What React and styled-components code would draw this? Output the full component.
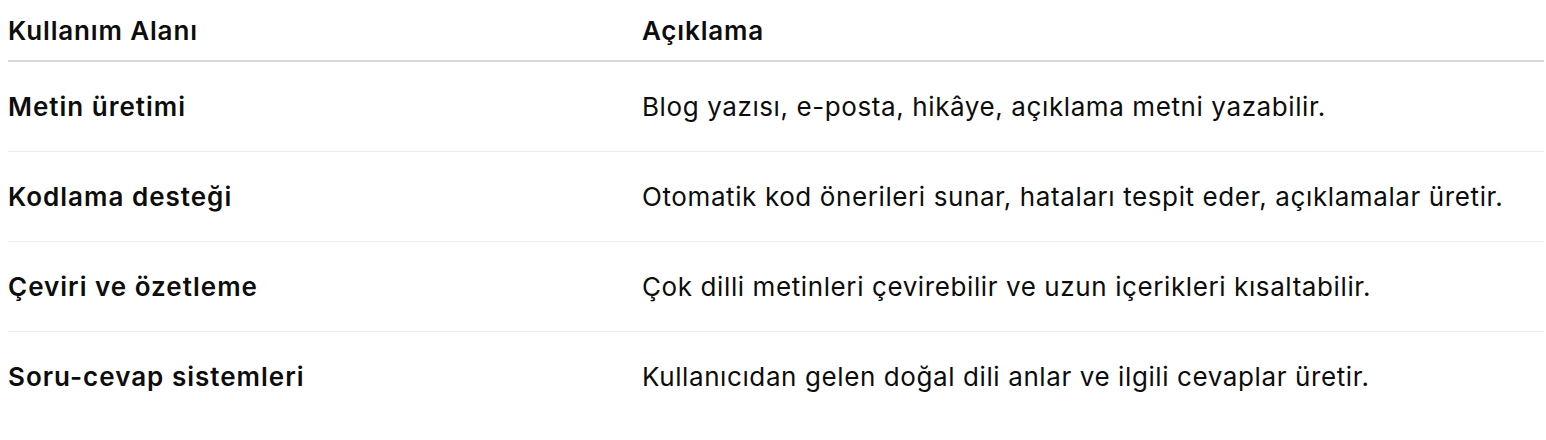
import React from 'react';
import styled, { createGlobalStyle } from 'styled-components';

const GlobalStyle = createGlobalStyle`
    body {
        margin: 0;
        background: #ffffff;
        font-family: Inter, "Noto Sans", sans-serif;
        color: #0d0d0d;
    }
`;

const Table = styled.div`
    margin: 0 2px 0 8px;
    display: grid;
    grid-template-columns: 634px 1fr;
    font-size: 26px;
    letter-spacing: 0.6px;
`;

const HeadCell = styled.div`
    height: 60px;
    display: flex;
    align-items: center;
    font-weight: 600;
    letter-spacing: 0.85px;
    border-bottom: 2px solid #d9d9d9;
`;

const Cell = styled.div`
    height: 89px;
    display: flex;
    align-items: center;
    font-weight: ${(p) => (p.$strong ? 600 : 400)};
    letter-spacing: ${(p) => (p.$strong ? '1px' : '0.6px')};
    border-bottom: ${(p) => (p.$last ? 'none' : '1px solid #ececec')};
`;

const rows = [
    ['Metin üretimi', 'Blog yazısı, e-posta, hikâye, açıklama metni yazabilir.'],
    ['Kodlama desteği', 'Otomatik kod önerileri sunar, hataları tespit eder, açıklamalar üretir.'],
    ['Çeviri ve özetleme', 'Çok dilli metinleri çevirebilir ve uzun içerikleri kısaltabilir.'],
    ['Soru-cevap sistemleri', 'Kullanıcıdan gelen doğal dili anlar ve ilgili cevaplar üretir.'],
];

const App = () => {
    return (
        <>
            <GlobalStyle />
            <Table>
                <HeadCell>Kullanım Alanı</HeadCell>
                <HeadCell>Açıklama</HeadCell>
                {rows.map(([area, desc], i) => (
                    <React.Fragment key={area}>
                        <Cell $strong $last={i === rows.length - 1}>{area}</Cell>
                        <Cell $last={i === rows.length - 1}>{desc}</Cell>
                    </React.Fragment>
                ))}
            </Table>
        </>
    );
};

export default App;
